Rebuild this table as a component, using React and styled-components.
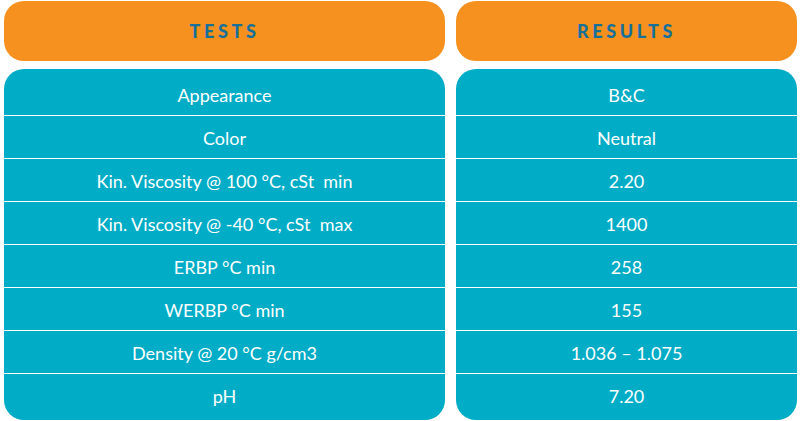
import styled, { createGlobalStyle } from 'styled-components'

const GlobalStyle = createGlobalStyle`
  body {
    margin: 0;
    background: #ffffff;
    font-family: Lato, "Open Sans", sans-serif;
  }
`

const Wrap = styled.div`
  display: grid;
  grid-template-columns: 441px 341px;
  column-gap: 11px;
  padding: 1px 0 0 4px;
  width: 800px;
  height: 421px;
  box-sizing: border-box;
`

const Column = styled.div`
  display: flex;
  flex-direction: column;
  gap: 8px;
`

const Head = styled.div`
  display: flex;
  align-items: center;
  justify-content: center;
  height: 60px;
  border-radius: 20px;
  background-color: #f6911f;
  color: #16709a;
  font-weight: 900;
  font-size: 18px;
  letter-spacing: 3.6px;
`

const Body = styled.div`
  display: flex;
  flex-direction: column;
  padding: 4px 0;
  border-radius: 20px;
  background-color: #00acc6;
  overflow: hidden;
`

const Row = styled.div`
  display: flex;
  align-items: center;
  justify-content: center;
  height: 40px;
  padding-top: 2px;
  color: #ffffff;
  font-size: 18px;
  border-top: ${({ first }) => (first ? 'none' : '1px solid #ffffff')};
`

const tests = [
  'Appearance',
  'Color',
  'Kin. Viscosity @ 100 °C, cSt\u00a0 min',
  'Kin. Viscosity @ -40 °C, cSt\u00a0 max',
  'ERBP °C min',
  'WERBP °C min',
  'Density @ 20 °C g/cm3',
  'pH',
]

const results = ['B&C', 'Neutral', '2.20', '1400', '258', '155', '1.036 – 1.075', '7.20']

const Table = ({ title, items }) => (
  <Column>
    <Head>{title}</Head>
    <Body>
      {items.map((item, i) => (
        <Row key={i} first={i === 0}>{item}</Row>
      ))}
    </Body>
  </Column>
)

const App = () => {
  return (
    <>
      <GlobalStyle />
      <Wrap>
        <Table title="TESTS" items={tests} />
        <Table title="RESULTS" items={results} />
      </Wrap>
    </>
  )
}

export default App
